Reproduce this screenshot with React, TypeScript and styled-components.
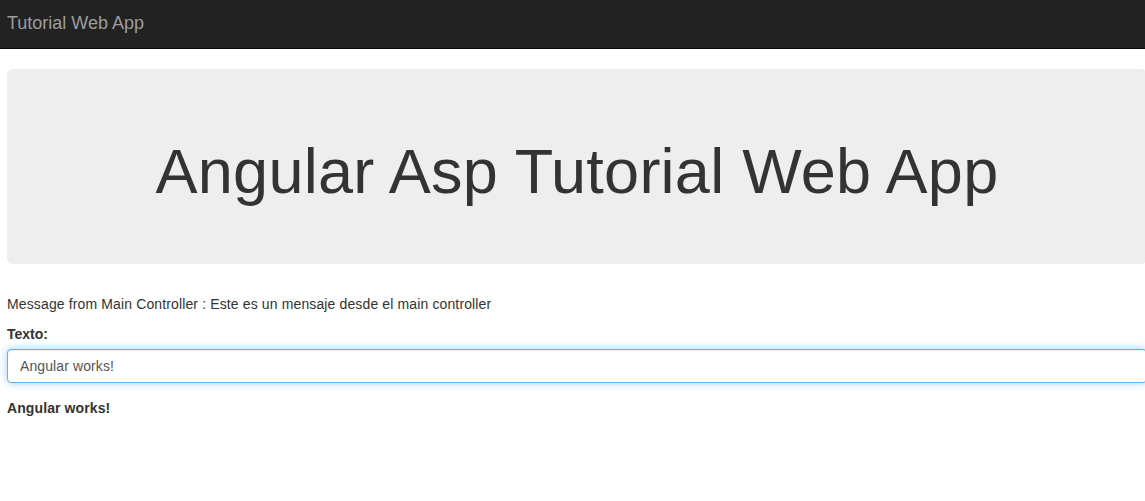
import React, { useState } from "react";
import styled, { createGlobalStyle } from "styled-components";

const GlobalStyle = createGlobalStyle`
  html, body {
    margin: 0;
    padding: 0;
    background: #fff;
    overflow-x: hidden;
  }
  body {
    font-family: "Liberation Sans", Arial, Helvetica, sans-serif;
    font-size: 14px;
    line-height: 20px;
    color: #333;
  }
  * {
    box-sizing: border-box;
  }
`;

const Navbar = styled.nav`
  height: 49px;
  background: #222;
  border-bottom: 1px solid #080808;
  display: flex;
  align-items: center;
  padding-left: 7px;
`;
const Brand = styled.a`
  font-size: 18px;
  line-height: 20px;
  color: #9d9d9d;
  text-decoration: none;
  margin-top: -2px;
`;
const Container = styled.main`
  padding-left: 7px;
  margin-right: -2px;
`;
const Jumbotron = styled.section`
  margin-top: 20px;
  margin-bottom: 30px;
  background: #eee;
  border-radius: 6px;
  padding: 48px 60px;
  text-align: center;
`;
const Heading = styled.h1`
  margin: 20px 0 10px;
  font-size: 63px;
  line-height: 69px;
  font-weight: 500;
  letter-spacing: 0.25px;
  color: #333;
`;
const Message = styled.p`
  margin: 0 0 10px;
  letter-spacing: 0.13px;
`;
const FormGroup = styled.div`
  margin-bottom: 15px;
`;
const Label = styled.label`
  display: block;
  font-weight: 700;
  margin-bottom: 5px;
`;
const Input = styled.input`
  display: block;
  width: 100%;
  height: 34px;
  padding: 6px 12px;
  font-family: inherit;
  font-size: 14px;
  line-height: 20px;
  letter-spacing: 0.1px;
  color: #555;
  background: #fff;
  border: 1px solid #66afe9;
  border-radius: 4px;
  outline: 0;
  box-shadow: inset 0 1px 1px rgba(0, 0, 0, 0.075),
    0 0 8px rgba(102, 175, 233, 0.6);
`;
const Output = styled.p`
  margin: 0;
  font-weight: 700;
  letter-spacing: 0.1px;
`;

const App = () => {
  const [texto, setTexto] = useState("Angular works!");
  return (
    <>
      <GlobalStyle />
      <Navbar>
        <Brand href="#">Tutorial Web App</Brand>
      </Navbar>
      <Container>
        <Jumbotron>
          <Heading>Angular Asp Tutorial Web App</Heading>
        </Jumbotron>
        <Message>
          Message from Main Controller : Este es un mensaje desde el main
          controller
        </Message>
        <FormGroup>
          <Label htmlFor="texto">Texto:</Label>
          <Input
            id="texto"
            type="text"
            value={texto}
            onChange={(e) => setTexto(e.target.value)}
          />
        </FormGroup>
        <Output>{texto}</Output>
      </Container>
    </>
  );
};

export default App;
